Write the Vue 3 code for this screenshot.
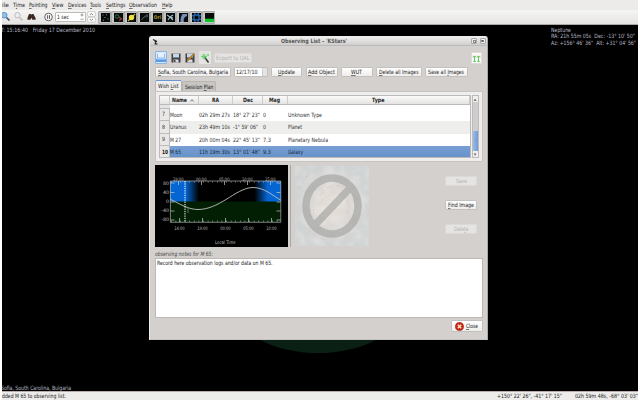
<script setup>
import { h } from 'vue'

// Fixed-width label; "&" marks the keyboard mnemonic of the next letter.
const T = (props) => {
  const parts = props.t.split('&')
  const kids = parts.length > 1
    ? [parts[0], h('tspan', { 'text-decoration': 'underline' }, parts[1][0]), parts[1].slice(1)]
    : [props.t]
  return h('svg', { width: props.w, height: 8, style: { display: 'block', overflow: 'visible', flex: 'none' } }, [
    h('text', { x: 0, y: 6, fill: 'currentColor', textLength: props.w, lengthAdjust: 'spacingAndGlyphs', style: { whiteSpace: 'pre' } }, kids)
  ])
}
T.props = ['t', 'w']

const menus = [['ile', 7], ['T&ime', 12], ['&Pointing', 18.5], ['&View', 11.5], ['&Devices', 18.5], ['&Tools', 11], ['&Settings', 19.5], ['&Observation', 28], ['&Help', 10.5]]
const rows = [
  ['7', 'Moon', 12.5, '02h 29m 27s', 31, '18° 27\' 23"', 27, '0', 3, 'Unknown Type', 34],
  ['8', 'Uranus', 16.5, '23h 49m 10s', 31, '-1° 59\' 06"', 25, '0', 3, 'Planet', 14],
  ['9', 'M 27', 11, '20h 00m 04s', 31, '22° 45\' 13"', 27, '7.3', 8, 'Planetary Nebula', 40],
  ['10', 'M 65', 11, '11h 19m 30s', 31, '13° 01\' 48"', 27, '9.3', 8, 'Galaxy', 15]
]
const top = ['19:00', '00:00', '05:00', '10:00', '15:00']
const bottom = ['14:00', '19:00', '00:00', '05:00', '10:00']
const alts = ['80', '40', '0', '-40', '-80']
</script>

<template>
  <div class="screen">
    <nav class="menu"><T v-for="m in menus" :key="m[0]" :t="m[0]" :w="m[1]" /></nav>
    <div class="tools">
      <svg class="lens" width="34" height="14" viewBox="2 11 34 14">
        <circle cx="4.200" cy="16.200" r="2.800" fill="#8fc0ee" stroke="#5d93cd" />
        <path d="M6.500 18.500l3 3" stroke="#45566b" stroke-width="1.700" />
        <circle cx="17.500" cy="16.200" r="2.700" fill="#eee" stroke="#bbb" />
        <path d="M19.500 18.500l3 3" stroke="#bbb" stroke-width="1.300" />
        <path d="M27.500 19l1.500-4h1.700l.5 1 .5-1h1.700l2.200 4v1.800h-3.200l-1-2-1 2h-3z" fill="#3c2a22" />
      </svg>
      <svg class="pause" width="9" height="10" viewBox="0 0 9 10"><circle cx="4.500" cy="5" r="3.800" fill="#f6f6f6" stroke="#444" stroke-width=".8" /><path d="M3.600 3.200v3.600M5.500 3.200v3.600" stroke="#333" stroke-width=".8" /></svg>
      <div class="step"><T t="1 sec" :w="12" /><svg width="4" height="8" viewBox="0 0 4 8"><path d="M.5 2h3M2 .5v3M.5 6.300h3" stroke="#777" stroke-width=".7" /></svg></div>
      <svg class="spin" width="9" height="12" viewBox="0 0 9 12"><rect x=".5" y=".5" width="8" height="5" rx="1.500" fill="#f8f8f7" stroke="#bbb" stroke-width=".6" /><rect x=".5" y="6.300" width="8" height="5" rx="1.500" fill="#f8f8f7" stroke="#bbb" stroke-width=".6" /><path d="M3 4l1.500-1.600L6 4M3 8l1.500 1.600L6 8" fill="none" stroke="#777" stroke-width=".8" /></svg>
      <div class="toggles">
        <span v-for="n in 9" :key="n" class="tg">
          <svg width="9" height="9" viewBox="0 0 9 9">
            <rect width="9" height="9" fill="#080b0c" />
            <path v-if="n === 1" d="M1.500 2h1M5 1.800h1M3.500 4.500h1M6.500 6h1M2 7.200h1" stroke="#8c97a3" stroke-width=".9" />
            <g v-if="n === 2" fill="none"><circle cx="3" cy="3.500" r="1.700" stroke="#277c3e" /><path d="M5 4l2.500 2-2.500 1.500" stroke="#a23a35" stroke-width="1.300" /></g>
            <g v-if="n === 3"><path d="M1 8L8 1" stroke="#c7ba28" stroke-width="1.200" /><circle cx="4.500" cy="4.500" r="2.700" fill="#f1e23a" /></g>
            <path v-if="n === 4" d="M1.500 7l2.500-3 1-.5L7 1.500l.5 2-2 .8" fill="none" stroke="#6d7478" stroke-width=".8" />
            <g v-if="n === 5" class="ori"><text x=".8" y="6.200" fill="#a3942b" textLength="7.400" lengthAdjust="spacingAndGlyphs">Ori</text></g>
            <path v-if="n === 6" d="M1 2l3 2 3-2M2 7l2-3 3 3M4 4l3 1" fill="none" stroke="#9fc0c5" stroke-width="1.100" />
            <path v-if="n === 7" d="M1.500 9c0-5 1-6 2-8h4.500v2L6 4 4.800 6v3z" fill="#7890b9" />
            <path v-if="n === 8" d="M0 3q4-2 9 0M0 6q4 2 9 0M3 0q-2 4 0 9M6 0q2 4 0 9" fill="none" stroke="#2563ad" stroke-width="1.300" />
            <rect v-if="n === 9" y="5.700" width="9" height="3.300" fill="#12c42a" />
          </svg>
        </span>
      </div>
    </div>

    <main class="sky">
      <div class="skytop">
        <T t="T: 15:16:40   Friday 17 December 2010" :w="94" class="clock" />
        <div class="focus"><T t="Neptune" :w="20" /><T t="RA: 21h 55m 05s  Dec: -13° 10' 50&quot;" :w="84" /><T t="Az: +156° 46' 36&quot;  Alt: +31° 04' 56&quot;" :w="85" /></div>
      </div>
      <div class="skybottom"><T t="Sofia, South Carolina, Bulgaria" :w="70" /></div>
      <svg class="ground" width="160" height="40" viewBox="0 0 160 40"><ellipse cx="80" cy="-30" rx="82" ry="45" fill="#0b2015" /></svg>
    </main>
    <footer class="status"><T t="dded M 65 to observing list." :w="64" /><span class="grow" /><T t="+150° 22' 26&quot;, -41° 17' 15&quot;" :w="65" /><T t="02h 59m 48s, -68° 03' 03&quot;" :w="63" /></footer>

    <section class="dialog">
      <header class="title">
        <svg width="7" height="7" viewBox="0 0 7 7"><path d="M1 1.500l4 2M3 3l1 3M2.500 6h3" stroke="#222" stroke-width="1.200" /></svg>
        <T t="Observing List – 'KStars'" :w="66" class="cap" />
        <span class="wins"><i><b /></i><i><em /></i></span>
      </header>
      <div class="body">
        <div class="icons">
          <span class="ib sel"><svg width="10" height="10" viewBox="0 0 10 10"><path d="M1 1h8v8H1z" fill="#8dbaf0" /><path d="M2 0h6v4.500H2z" fill="#e5f1ff" /><path d="M0 6h10v3H0z" fill="#5a9ce4" /><path d="M1 5.500h8v1H1z" fill="#bbdaff" /></svg></span>
          <span class="ib"><svg width="10" height="10" viewBox="0 0 10 10"><path d="M.5.5h9v9h-9z" fill="#3c424a" /><path d="M2 .5h6v4H2z" fill="#c8d7e5" /><path d="M2.500 6.500h5v3h-5z" fill="#ddd" /><path d="M3 7h1.500v2H3z" fill="#444" /></svg></span>
          <span class="ib"><svg width="10" height="10" viewBox="0 0 10 10"><path d="M.5.5h9v9h-9z" fill="#3c424a" /><path d="M2 .5h6v4H2z" fill="#c8d7e5" /><path d="M2.500 6.500h5v3h-5z" fill="#ddd" /><path d="M2.500 7.500L9 .8" stroke="#bd7d2c" stroke-width="1.800" /></svg></span>
          <span class="ib wand"><svg width="10" height="10" viewBox="0 0 10 10"><path d="M4.500 4l4 5.500" stroke="#354039" stroke-width="1.600" /><path d="M4 .5v6M1 3.500h6M2 1.500l4 4M6 1.500l-4 4M8 1v2M7 2h2" stroke="#62d56b" stroke-width="1" /></svg></span>
          <span class="btn off oal"><T t="Export to OAL" :w="33.500" /></span>
          <span class="grow" />
          <span class="dock"><svg width="7" height="6" viewBox="0 0 7 6"><path d="M.3.5h2.400M.3 5.500h2.400M1.500.5v5M4.300.5h2.400M4.300 5.500h2.400M5.500.5v5" stroke="#64c95e" stroke-width="1.100" /></svg></span>
        </div>
        <div class="acts">
          <span class="btn b1"><T t="&Sofia, South Carolina, Bulgaria" :w="70" /></span>
          <span class="date"><T t="12/17/10" :w="21.500" /><i /></span>
          <span class="btn b2"><T t="&Update" :w="17" /></span>
          <span class="btn b3"><T t="&Add Object" :w="27" /></span>
          <span class="btn b4"><T t="&WUT" :w="11" /></span>
          <span class="btn b5"><T t="&Delete all Images" :w="39.500" /></span>
          <span class="btn b6"><T t="Save all &Images" :w="36" /></span>
        </div>
        <div class="tabs"><span class="tab on"><T t="Wish &List" :w="20.500" /></span><span class="tab"><T t="Session &Plan" :w="28.500" /></span></div>
        <div class="panel">
          <div class="table">
            <div class="row head">
              <span /><span><T t="Name" :w="15" /><svg width="4" height="3" viewBox="0 0 4 3"><path d="M.4 2.500L2 .7l1.600 1.800" fill="none" stroke="#444" stroke-width=".7" /></svg></span>
              <span><T t="RA" :w="7" /></span><span><T t="Dec" :w="10" /></span><span><T t="Mag" :w="11" /></span><span><T t="Type" :w="12.500" /></span>
            </div>
            <div class="row part"><span /></div>
            <div v-for="r in rows" :key="r[0]" class="row data" :class="{ alt: r[0] === '8', cur: r[0] === '10' }">
              <span class="num"><T :t="r[0]" :w="r[0].length * 3" /></span>
              <span v-for="k in [1, 3, 5, 7, 9]" :key="k"><T :t="r[k]" :w="r[k + 1]" /></span>
            </div>
          </div>
          <div class="scroll"><i class="up">▴</i><span /><b>:</b><i>▾</i></div>
        </div>
        <div class="view">
          <svg class="plot" width="133" height="82" viewBox="155 165 133 82">
            <defs>
              <linearGradient id="sky"><stop offset="0" stop-color="#0566d3" /><stop offset=".14" stop-color="#0566d3" /><stop offset=".26" stop-color="#000" /><stop offset=".76" stop-color="#000" /><stop offset=".88" stop-color="#0566d3" /><stop offset="1" stop-color="#0566d3" /></linearGradient>
            </defs>
            <rect x="155" y="165" width="133" height="82" fill="#000" />
            <rect x="170" y="181" width="111" height="21" fill="url(#sky)" />
            <rect x="170" y="201.500" width="111" height="21" fill="#021f03" />
            <path d="M170.400 181v41.300H280.800V181z" fill="none" stroke="#c8c8c8" stroke-width=".6" />
            <path d="M179.500 222v-4M202.500 222v-4M225.500 222v-4M248.500 222v-4M271.500 222v-4M178.500 181v4M201.500 181v4M224.500 181v4M247.500 181v4M270.500 181v4M170.500 183h4M170.500 192.500h4M170.500 202h4M170.500 211h4M170.500 220h4M276.500 183h4M276.500 192.500h4M276.500 202h4M276.500 211h4M276.500 220h4" stroke="#c8c8c8" stroke-width=".7" />
            <path d="M171 221.300h109" stroke="#9aa" stroke-width="1.600" stroke-dasharray=".6 4" />
            <path d="M171 182h109" stroke="#9aa" stroke-width="1.600" stroke-dasharray=".6 4" />
            <path d="M170.500 199.300C180 204 188 209.500 198 209.500C208 209.500 217 205 226 199.500C235 194 244 187.500 253 187.500C264 187.500 272 195 280.500 200" fill="none" stroke="#bcc3bf" stroke-width=".9" />
            <path d="M185 181v41" stroke="#fff" stroke-width="1" stroke-dasharray="1.300 1" />
            <path d="M187 206.500l1 1.500v5" fill="none" stroke="#8a988c" stroke-width=".7" />
            <g fill="#bbb" class="tick">
              <text v-for="(s, i) in top" :key="'t' + i" :x="173 + i * 23" y="180.700" textLength="10.500" lengthAdjust="spacingAndGlyphs">{{ s }}</text>
              <text v-for="(s, i) in bottom" :key="'b' + i" :x="174.200 + i * 23" y="230" textLength="10.500" lengthAdjust="spacingAndGlyphs">{{ s }}</text>
              <text v-for="(s, i) in alts" :key="'a' + i" x="169" :y="184.800 + i * 9.100" text-anchor="end">{{ s }}</text>
              <text x="215" y="244.300" textLength="20.500" lengthAdjust="spacingAndGlyphs">Local Time</text>
            </g>
          </svg>
          <i class="split" />
          <svg class="pic" width="74" height="80" viewBox="0 0 74 80">
            <defs>
              <radialGradient id="core"><stop offset="0" stop-color="#e6dfd6" /><stop offset=".5" stop-color="#dcd8d5" /><stop offset="1" stop-color="#d0d3d3" /></radialGradient>
              <filter id="mist" x="0" y="0" width="1" height="1"><feTurbulence type="fractalNoise" baseFrequency=".1" numOctaves="3" seed="4" /><feColorMatrix values="0 0 0 0 .9  0 0 0 0 .89  0 0 0 0 .88  1.800 0 0 0 -.65" /></filter>
            </defs>
            <rect width="74" height="80" fill="url(#core)" />
            <rect width="74" height="80" filter="url(#mist)" opacity=".4" />
            <g fill="none" stroke="#ddb5b0" stroke-width="1" opacity=".45"><path d="M25 30q8-14 24-9q16 6 12 23M19 43q-3 14 10 20M9 60q8 10 23 14M3 22q5-3 12-17M44 27q14 7 8 21M61 60l7-13" stroke-dasharray="5 1 2 2" /></g>
            <g fill="none" stroke="#a3a5a2" stroke-width="7.500" opacity=".68"><path d="M37 12a26 28 0 1 0 .01 0zM19 60L56 21" /></g>
          </svg>
          <div class="side"><span class="btn off"><T t="Save" :w="11" /></span><span class="btn"><T t="&Find Image" :w="26" /></span><span class="btn off"><T t="Dele&te" :w="14.500" /></span></div>
        </div>
        <div class="label"><T t="observing notes for M 65:" :w="58" /></div>
        <div class="notes"><T t="Record here observation logs and/or data on M 65." :w="115.500" /></div>
        <div class="foot"><span class="btn close"><svg width="9" height="9" viewBox="0 0 9 9"><circle cx="4.500" cy="4.500" r="4.300" fill="#c82318" stroke="#9d251d" stroke-width=".4" /><path d="M2.800 2.800l3.400 3.400M6.200 2.800L2.800 6.200" stroke="#ffe8bd" stroke-width="1.500" /></svg><T t="&Close" :w="12" /></span></div>
      </div>
    </section>
  </div>
</template>

<style>
body { background: #fff; overflow: hidden; }
</style>
<style scoped>
* { box-sizing: border-box; }
.screen { position: relative; width: 640px; height: 400px; padding: 0 2px; display: flex; flex-direction: column; font: 5.900px "DejaVu Sans", sans-serif; color: #222; overflow: hidden; }
.menu { height: 10px; background: #ecebea; display: flex; gap: 4.200px; padding-top: 1px; }
.tools { height: 15px; background: linear-gradient(#f5f5f4, #e5e4e2); border-bottom: 1px solid #aaa9a7; display: flex; align-items: center; }
.pause { margin-left: 8px; }
.step { margin-left: 2px; width: 31px; height: 10px; background: #fff; border: 1px solid #bbb; border-radius: 1px; display: flex; justify-content: space-between; align-items: center; padding: 0 1px; }
.spin { margin-left: 1px; }
.toggles { display: flex; margin-left: 2px; }
.tg { width: 13px; height: 13px; padding: 1.500px; background: #c8c6c4; border: .5px solid #aaa; border-radius: 1px; }
.tg svg { display: block; }
.ori { font: bold 5px "DejaVu Sans", sans-serif; }
.sky { position: relative; height: 366px; background: #000; color: #b9b9c4; display: flex; flex-direction: column; justify-content: space-between; overflow: hidden; }
.skytop { display: flex; justify-content: space-between; padding: 1px 2.500px 0 0; }
.clock { margin-left: -1.500px; }
.focus { width: 85px; display: grid; grid-auto-rows: 6.300px; }
.skybottom { margin: 0 0 -.5px -1.500px; }
.ground { position: absolute; left: 236px; top: 313px; }
.status { height: 9px; border-top: 1px solid #b8adab; background: #edecea; display: flex; align-items: center; gap: 13px; }
.grow { flex: 1; }

.dialog { position: absolute; left: 149px; top: 36px; width: 339px; height: 303.500px; background: #d3d0cd; border: 1px solid #eeedec; border-right: 1.500px solid #aaa8a6; border-bottom-color: #c5c3c1; border-radius: 3px 3px 0 0; }
.title { height: 9px; background: linear-gradient(#efefee, #d0cecc); border-bottom: .5px solid #bbb; display: flex; justify-content: space-between; align-items: center; padding: 0 1.500px 0 2px; border-radius: 2px 2px 0 0; }
.cap { font-weight: bold; color: #555; margin-right: 2px; }
.wins { display: flex; gap: 2.500px; }
.wins i { width: 6px; height: 6px; border: .5px solid #aaa; background: #eee; border-radius: 1px; display: grid; place-items: center; }
.wins b { width: 3px; height: 3px; border: .5px solid #888; }
.wins em { width: 2.500px; height: 2.500px; background: #666; border-radius: 1px; }
.body { padding: 4.500px 4.500px 0 5px; display: flex; flex-direction: column; }
.icons { height: 14px; display: flex; align-items: center; }
.ib { width: 12px; height: 13px; display: grid; place-items: center; margin-right: 2.500px; }
.wand { background: #e6e4e2; border-radius: 1px; }
.sel { background: #d9e9fb; border: 1px solid #8bb4e4; border-radius: 1px; }
.btn { height: 10px; border: 1px solid #c3c1bf; border-radius: 1.500px; background: linear-gradient(#fff, #eeedec); display: flex; align-items: center; justify-content: center; flex: none; }
.off { color: #b3b1af; background: #e6e4e2; border-color: #dbd9d7; }
.oal { width: 38px; margin-left: .5px; }
.dock { width: 11px; height: 12px; border: 1px solid #dddbd8; background: linear-gradient(#fff, #e5e5e3 45%, #fafafa 46%); display: grid; place-items: end center; padding-bottom: 1px; margin-right: 1px; }
.acts { display: flex; margin-top: 2px; height: 10px; }
.b1 { width: 76px; }
.date { width: 34px; margin-left: 3px; display: flex; align-items: center; background: #fff; border: 1px solid #c1bfbd; padding-left: 1px; border-radius: 1px; }
.date i { margin-left: auto; width: 5px; height: 8px; background: #e6e5e3; border-left: .5px solid #ccc; }
.b2 { width: 31px; margin-left: 3px; }
.b3 { width: 32px; margin-left: 3.500px; }
.b4 { width: 32px; margin-left: 3px; }
.b5 { width: 46px; margin-left: 3px; }
.b6 { width: 43px; margin-left: 3px; }
.tabs { display: flex; height: 11.500px; margin-top: 3px; align-items: flex-end; }
.tab { height: 10px; width: 34px; background: #c8c5c2; border: 1px solid #b7b4b1; border-bottom: 0; border-radius: 2px 2px 0 0; display: grid; place-items: center; }
.on { width: 27px; height: 11.500px; background: #efeeed; border-top: 1px solid #6999d4; }
.panel { height: 71px; background: #efeeec; border: 1px solid #c6c3c0; border-radius: 1px; display: flex; padding: 3px 3px 4px; }
.table { width: 313px; height: 63px; background: #fff; border: .5px solid #bbb; overflow: hidden; }
.row { display: grid; grid-template-columns: 9.500px 29.500px 34px 30px 24.500px 1fr; }
.head { height: 9px; background: linear-gradient(#fbfbfb, #e4e3e2); border-bottom: .5px solid #bbb; font-weight: bold; }
.head span { display: flex; align-items: center; justify-content: center; border-right: .5px solid #cfcdcb; gap: 3px; }
.head span:nth-child(2) { justify-content: flex-start; padding-left: 2.500px; }
.part { height: 3.500px; background: #fff; }
.part span { background: #e5e4e2; border-bottom: .5px solid #bbb; }
.data { height: 12.500px; color: #333; }
.data span { display: flex; align-items: center; padding-left: 0; }
.data .num { background: #e9e8e7; border-right: .5px solid #bbb; border-bottom: .5px solid #bbb; padding-left: 1.500px; }
.alt { background: #eeeeed; }
.cur { background: linear-gradient(#789fd4, #6390c6); color: #17263a; }
.cur .num { font-weight: bold; color: #111; }
.scroll { width: 7px; height: 63px; margin-left: 1px; border: .5px solid #bbb; background: #cfcdcb; display: flex; flex-direction: column; }
.scroll i { height: 6px; font: 5px/6px "DejaVu Sans", sans-serif; text-align: center; background: #f1f0ef; color: #666; }
.scroll span { flex: 1; }
.scroll b { height: 20px; background: linear-gradient(90deg, #9abce7, #6f9cd7); font: 5px/19px "DejaVu Sans", sans-serif; text-align: center; color: #35577f; }
.view { display: flex; margin-top: 3px; height: 83px; }
.tick { font-size: 4.800px; }
.plot { flex: none; }
.split { width: 1px; height: 82px; margin-left: 2px; background: #aaa8a6; }
.pic { margin: 1px 0 0 4px; }
.side { margin: 11px 5.500px 0 auto; display: flex; flex-direction: column; gap: 14px; }
.side .btn { width: 32px; }
.label { height: 10px; font-style: italic; padding-top: 1.500px; color: #444; }
.notes { height: 59.500px; background: #fff; border: 1px solid #bbb8b5; padding: 0 1px; }
.foot { display: flex; justify-content: flex-end; margin-top: 2.500px; }
.close { width: 32px; height: 12px; gap: 1.500px; }
</style>
